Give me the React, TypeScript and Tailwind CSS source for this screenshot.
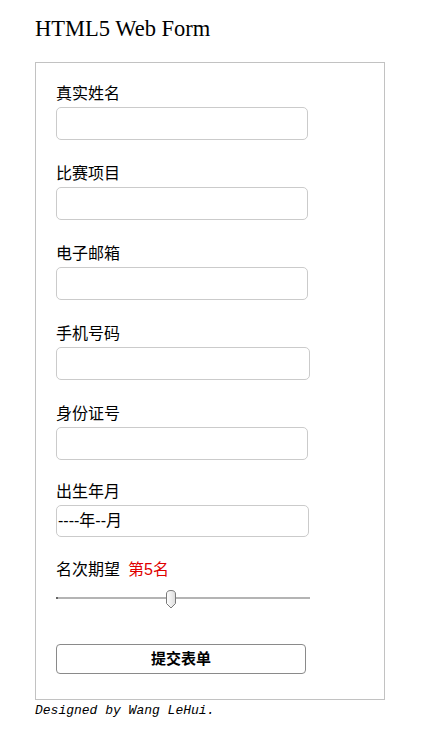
import React from "react";

const cjk = { fontFamily: '"Liberation Sans", "Noto Sans CJK SC", sans-serif' };

function Field({ label, w = "w-[252px]", gapTop = "mt-[24px]" }: { label: string; w?: string; gapTop?: string }) {
  return (
    <div className={`flex flex-col ${gapTop}`}>
      <div className="h-[20px] text-[16px] leading-[20px] text-black">{label}</div>
      <input
        type="text"
        className={`mt-[3px] block h-[33px] ${w} rounded-[5px] border border-[#cbcbcb] bg-white outline-none`}
      />
    </div>
  );
}

export default function App() {
  return (
    <div className="min-h-[745px] bg-white pl-[35px] pt-[16px]" style={cjk}>
      <h1
        className="h-[26px] text-[22.5px] font-normal leading-[26px] text-black"
        style={{ fontFamily: '"Liberation Serif", serif' }}
      >
        HTML5 Web Form
      </h1>
      <div className="mt-[20px] w-[350px] border border-[#c2c2c2] pb-[25px] pl-[20px] pt-[21px]">
        <Field label="真实姓名" gapTop="" />
        <Field label="比赛项目" />
        <Field label="电子邮箱" />
        <Field label="手机号码" w="w-[254px]" />
        <Field label="身份证号" />
        <div className="mt-[22px] flex flex-col">
          <div className="h-[20px] text-[16px] leading-[20px] text-black">出生年月</div>
          <div className="mt-[3px] flex h-[32px] w-[253px] items-center rounded-[5px] border border-[#cbcbcb] bg-white pl-[1px] text-[16px] text-black">
            ----年--月
          </div>
        </div>
        <div className="mt-[23px] flex h-[20px] items-center text-[16px] leading-[20px] text-black">
          <span>名次期望</span>
          <span className="ml-[8px] text-[#e00000]">第5名</span>
        </div>
        <div className="relative h-[36px] w-[254px] pt-[17px]">
          <div className="h-[2px] w-full bg-[#b4b4b4]" />
          <div className="absolute left-0 top-[17px] h-[2px] w-[2px] bg-[#666]" />
          <svg className="absolute left-[109px] top-[10px]" width="12" height="19" viewBox="0 0 12 19">
            <defs>
              <linearGradient id="tg" x1="0" y1="0" x2="1" y2="0">
                <stop offset="0" stopColor="#ffffff" />
                <stop offset="1" stopColor="#dcdcdc" />
              </linearGradient>
            </defs>
            <path
              d="M1.5 4 Q1.5 0.5 6 0.5 Q10.5 0.5 10.5 4 L10.5 13.5 L6 18 L1.5 13.5 Z"
              fill="url(#tg)"
              stroke="#7a7a7a"
              strokeWidth="1"
            />
          </svg>
        </div>
        <button
          type="button"
          className="mt-[28px] flex h-[30px] w-[250px] items-center justify-center rounded-[4px] border border-[#8a8a8a] bg-white text-[15px] font-bold text-black"
        >
          提交表单
        </button>
      </div>
      <div
        className="mt-[3px] h-[15px] text-[13px] italic leading-[15px] text-black"
        style={{ fontFamily: '"Liberation Mono", monospace' }}
      >
        Designed by Wang LeHui.
      </div>
    </div>
  );
}
